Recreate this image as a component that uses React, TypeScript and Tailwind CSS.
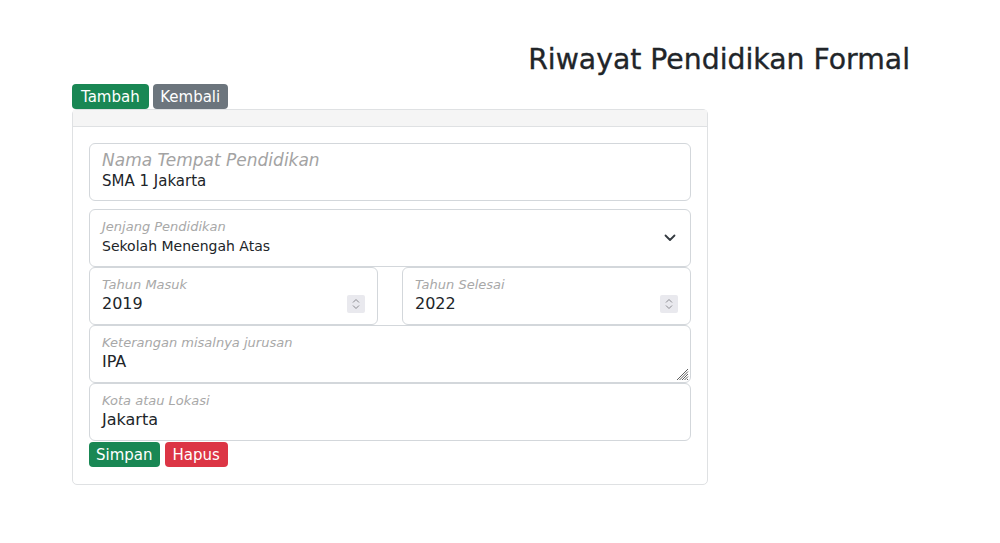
import React from "react";

const font = { fontFamily: '"DejaVu Sans", "Open Sans", sans-serif' };

function Field({
  label,
  value,
  big,
  small,
  children,
  className = "",
}: {
  label: string;
  value: string;
  big?: boolean;
  small?: boolean;
  children?: React.ReactNode;
  className?: string;
}) {
  const valueSize = big ? "text-[15px] leading-[20px]" : small ? "text-[14px] leading-[20px]" : "text-[16px] leading-[22px]";
  return (
    <div
      className={`relative h-[58px] rounded-[6px] border border-[#d3d7db] bg-white px-3 ${className}`}
    >
      {big ? (
        <div className="pt-[5px] text-[17px] italic leading-[22px] text-[#a3a3a3]">{label}</div>
      ) : (
        <div className="pt-[9px] text-[13px] italic leading-[16px] text-[#a8a8a8]">{label}</div>
      )}
      <div className={`${valueSize} ${small ? "pt-[1px]" : ""} text-[#212529]`}>{value}</div>
      {children}
    </div>
  );
}

// little up/down arrows of a number input
function Spinner() {
  return (
    <div className="absolute right-[12px] top-[27px] flex h-[18px] w-[18px] items-center justify-center rounded-[2px] bg-[#e9e9ee]">
      <svg width="8" height="12" viewBox="0 0 8 12" fill="none" stroke="#8a8a90" strokeWidth="1">
        <path d="M1 4.5 L4 1.5 L7 4.5" />
        <path d="M1 7.5 L4 10.5 L7 7.5" />
      </svg>
    </div>
  );
}

export default function App() {
  return (
    <div className="min-h-screen bg-white pl-[72px] pr-[90px] pt-[43px]" style={font}>
      <div className="flex justify-end">
        <h3 className="text-[28.3px] font-medium leading-[34px] text-[#212529] [-webkit-text-stroke:0.35px_#212529]">
          Riwayat Pendidikan Formal
        </h3>
      </div>

      <div className="mt-[7px] flex gap-[4px]">
        <button className="h-[25px] rounded-[4px] bg-[#198754] px-[9px] pt-[1px] text-[15px] leading-[24px] text-white">
          Tambah
        </button>
        <button className="h-[25px] rounded-[4px] bg-[#6c757d] px-[7.5px] pt-[1px] text-[15px] leading-[24px] text-white">
          Kembali
        </button>
      </div>

      <div className="w-[636px] rounded-[5px] border border-[#dfe1e3]">
        <div className="h-[17px] border-b border-[#dfe1e3] bg-[#f5f5f5]" />
        <div className="px-4 pb-[17px] pt-4">
          <Field big label="Nama Tempat Pendidikan" value="SMA 1 Jakarta" />

          <Field small className="mt-[8px]" label="Jenjang Pendidikan" value="Sekolah Menengah Atas">
            <svg
              className="absolute right-[14px] top-[24px]"
              width="12"
              height="8"
              viewBox="0 0 12 8"
              fill="none"
              stroke="#343a40"
              strokeWidth="1.8"
              strokeLinecap="round"
              strokeLinejoin="round"
            >
              <path d="M1.5 1.5 L6 6 L10.5 1.5" />
            </svg>
          </Field>

          <div className="flex gap-[24px]">
            <Field className="flex-1" label="Tahun Masuk" value="2019">
              <Spinner />
            </Field>
            <Field className="flex-1" label="Tahun Selesai" value="2022">
              <Spinner />
            </Field>
          </div>

          <Field label="Keterangan misalnya jurusan" value="IPA">
            <svg
              className="absolute bottom-[1px] right-[1px]"
              width="13"
              height="13"
              viewBox="0 0 13 13"
              stroke="#5f5f5f"
              strokeWidth="1"
            >
              <path d="M12 1 L1 12 M12 3.5 L3.5 12 M12 6 L6 12 M12 8.5 L8.5 12 M12 11 L11 12" />
            </svg>
          </Field>

          <Field label="Kota atau Lokasi" value="Jakarta" />

          <div className="mt-[1px] flex gap-[5px]">
            <button className="h-[25px] rounded-[4px] bg-[#198754] px-[7px] pt-[1px] text-[15px] leading-[24px] text-white">
              Simpan
            </button>
            <button className="h-[25px] rounded-[4px] bg-[#dc3545] px-[8px] pt-[1px] text-[15px] leading-[24px] text-white">
              Hapus
            </button>
          </div>
        </div>
      </div>
    </div>
  );
}
